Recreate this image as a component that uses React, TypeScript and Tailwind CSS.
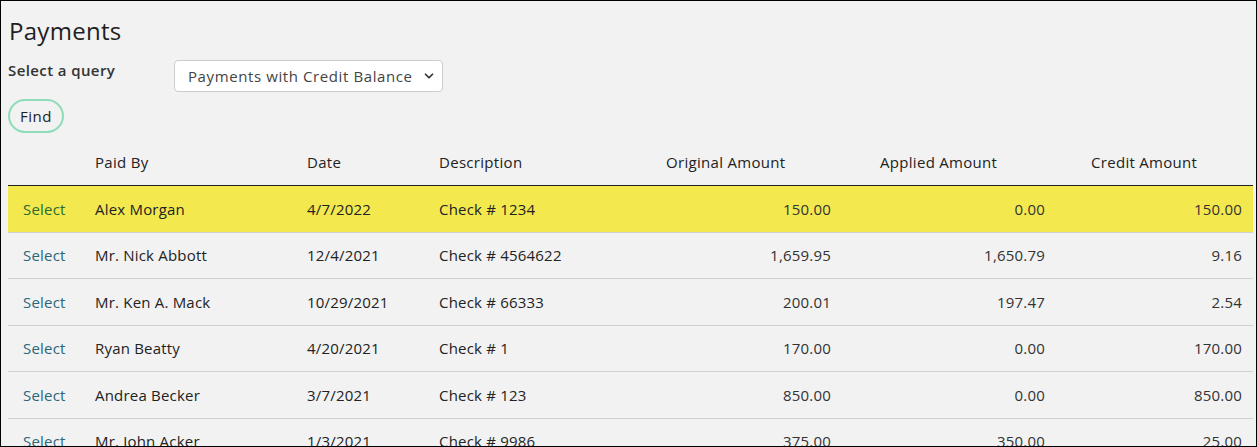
import { ChevronDown } from 'lucide-react';

type Payment = {
  paidBy: string;
  date: string;
  description: string;
  original: string;
  applied: string;
  credit: string;
};

const payments: Payment[] = [
  { paidBy: 'Alex Morgan', date: '4/7/2022', description: 'Check # 1234', original: '150.00', applied: '0.00', credit: '150.00' },
  { paidBy: 'Mr. Nick Abbott', date: '12/4/2021', description: 'Check # 4564622', original: '1,659.95', applied: '1,650.79', credit: '9.16' },
  { paidBy: 'Mr. Ken A. Mack', date: '10/29/2021', description: 'Check # 66333', original: '200.01', applied: '197.47', credit: '2.54' },
  { paidBy: 'Ryan Beatty', date: '4/20/2021', description: 'Check # 1', original: '170.00', applied: '0.00', credit: '170.00' },
  { paidBy: 'Andrea Becker', date: '3/7/2021', description: 'Check # 123', original: '850.00', applied: '0.00', credit: '850.00' },
  { paidBy: 'Mr. John Acker', date: '1/3/2021', description: 'Check # 9986', original: '375.00', applied: '350.00', credit: '25.00' },
];

const cols = 'grid grid-cols-[77px_212px_132px_227px_214px_211px_171px]';

export default function App() {
  return (
    <div
      className="w-[1257px] h-[447px] overflow-hidden border border-black bg-[#f2f2f2] text-[#222]"
      style={{ fontFamily: '"Open Sans", "Liberation Sans", sans-serif' }}
    >
      <div className="pl-[7px] pr-[3px] pt-[14px]">
        <h1 className="pl-[1px] text-[24px] leading-[31px] tracking-[0.3px] text-[#1f1f1f]">Payments</h1>

        {/* Query picker */}
        <div className="mt-[14px] flex items-start">
          <label className="-mt-[1px] w-[166px] text-[15px] font-semibold tracking-[0.4px] text-[#333]">Select a query</label>
          <div className="flex h-[32px] w-[269px] items-center justify-between rounded-[4px] border border-[#ccc] bg-white pl-[13px] pr-[6px] text-[15px] text-[#444]">
            <span className="tracking-[0.6px]">Payments with Credit Balance</span>
            <ChevronDown className="h-[14px] w-[14px] text-[#333]" strokeWidth={3} />
          </div>
        </div>

        <button className="mt-[7px] h-[34px] rounded-full border-2 border-[#8fdcb9] px-[10px] text-[15px] tracking-[0.5px] text-[#222]">
          Find
        </button>

        {/* Results */}
        <div className="mt-[7px] w-[1245px]">
          <div className={`${cols} h-[46px] items-center border-b border-[#222] text-[15px] tracking-[0.3px] text-[#222]`}>
            <div />
            <div className="pl-[10px]">Paid By</div>
            <div className="pl-[10px]">Date</div>
            <div className="pl-[10px]">Description</div>
            <div className="pl-[10px]">Original Amount</div>
            <div className="pl-[10px]">Applied Amount</div>
            <div className="pl-[10px]">Credit Amount</div>
          </div>

          {payments.map((p, i) => {
            const active = i === 0;
            return (
              <div
                key={p.paidBy}
                className={`${cols} h-[46.5px] items-center border-b border-[#d0d0d0] text-[15px] tracking-[0.2px] ${
                  active ? 'bg-[#f3e94f]' : ''
                }`}
              >
                <div className={`pl-[15px] ${active ? 'text-[#2b6a31]' : 'text-[#2a6678]'}`}>Select</div>
                <div className="pl-[10px]">{p.paidBy}</div>
                <div className="pl-[10px]">{p.date}</div>
                <div className="pl-[10px]">{p.description}</div>
                <div className="pr-[39px] text-right text-[#333]">{p.original}</div>
                <div className="pr-[36px] text-right text-[#333]">{p.applied}</div>
                <div className="pr-[10px] text-right text-[#333]">{p.credit}</div>
              </div>
            );
          })}
        </div>
      </div>
    </div>
  );
}
